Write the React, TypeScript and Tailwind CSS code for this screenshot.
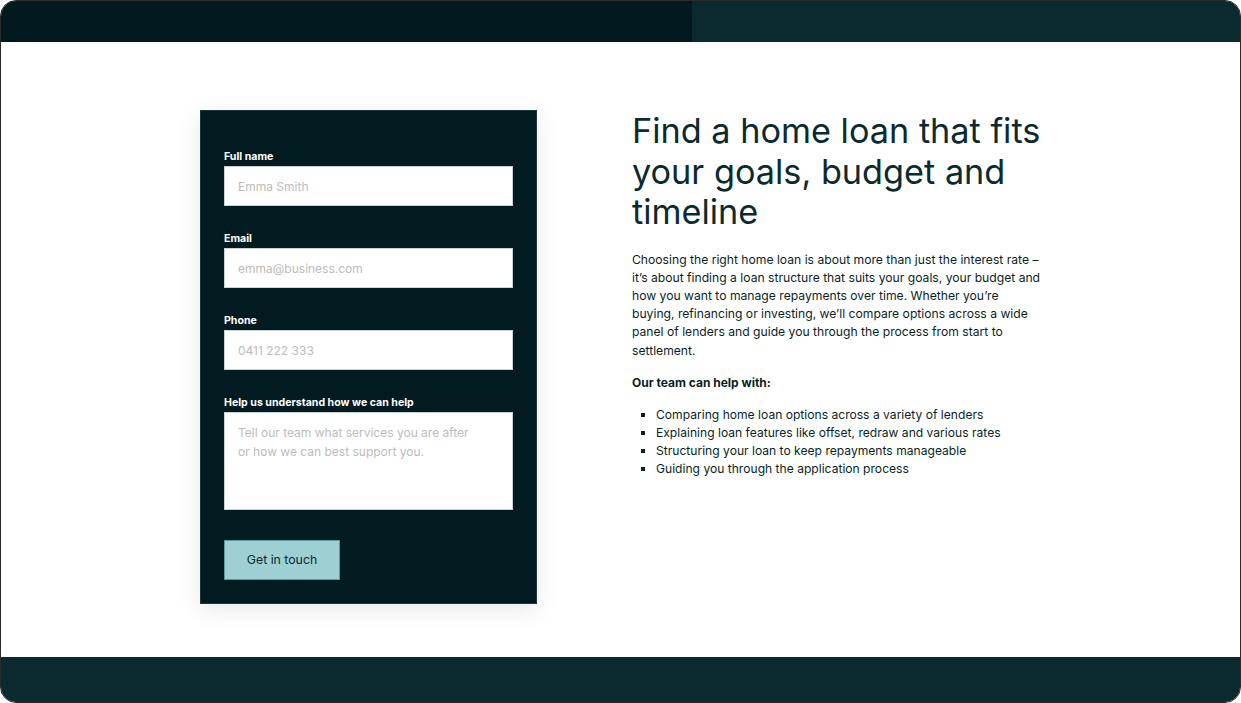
import React from "react";

const font = { fontFamily: "Inter, 'Noto Sans', sans-serif" };

function Field({ label, placeholder }: { label: string; placeholder: string }) {
  return (
    <div className="flex flex-col">
      <label className="text-[10.6px] leading-[13px] font-bold text-white mb-[3px]">{label}</label>
      <input
        className="h-[40px] w-full bg-white border border-[#c9d3d5] px-[13px] text-[12px] text-[#0b2a30] placeholder:text-[#bcbcbc] outline-none"
        placeholder={placeholder}
      />
    </div>
  );
}

export default function App() {
  return (
    <div style={font} className="bg-white">
      <div className="h-[703px] w-full flex flex-col rounded-[16px] border border-[#2b2b2b] overflow-hidden">
        <div className="h-[41px] flex shrink-0">
          <div className="w-[691px] bg-[#021a1f]" />
          <div className="flex-1 bg-[#0b2a30]" />
        </div>
        <div className="flex-1 flex items-start pl-[199px] pt-[68px]">
          <div className="w-[337px] shrink-0 bg-[#021b20] border border-[#1c3539] shadow-[0_6px_24px_rgba(0,0,0,0.09)] px-[23px] pt-[39px] pb-[23px]">
            <div className="flex flex-col gap-[26px]">
              <Field label="Full name" placeholder="Emma Smith" />
              <Field label="Email" placeholder="emma@business.com" />
              <Field label="Phone" placeholder="0411 222 333" />
              <div className="flex flex-col">
                <label className="text-[10.6px] leading-[13px] font-bold text-white mb-[3px]">
                  Help us understand how we can help
                </label>
                <textarea
                  className="h-[98px] w-full resize-none bg-white border border-[#c9d3d5] px-[13px] pt-[10px] text-[12px] leading-[19px] text-[#0b2a30] placeholder:text-[#bcbcbc] outline-none"
                  placeholder={"Tell our team what services you are after\nor how we can best support you."}
                />
              </div>
            </div>
            <button className="mt-[30px] h-[40px] w-[116px] bg-[#9ecfd3] border border-[#5c9aa0] text-[12.3px] text-[#0b2a30]">
              Get in touch
            </button>
          </div>
          <div className="ml-[95px] w-[410px] shrink-0 text-[#0a1f24]">
            <h1 className="w-[440px] pt-[1px] text-[34.25px] leading-[40.5px] font-normal text-[#0b2a30]">
              Find a home loan that fits your goals, budget and timeline
            </h1>
            <p className="mt-[18px] text-[12.15px] leading-[18.2px]">
              Choosing the right home loan is about more than just the interest rate – it’s about finding a loan
              structure that suits your goals, your budget and how you want to manage repayments over time. Whether
              you’re buying, refinancing or investing, we’ll compare options across a wide panel of lenders and guide
              you through the process from start to settlement.
            </p>
            <p className="mt-[14px] text-[12px] leading-[18px] font-bold">Our team can help with:</p>
            <ul className="mt-[14px] list-[square] pl-[24px] text-[12.1px] leading-[18.2px]">
              <li>Comparing home loan options across a variety of lenders</li>
              <li>Explaining loan features like offset, redraw and various rates</li>
              <li>Structuring your loan to keep repayments manageable</li>
              <li>Guiding you through the application process</li>
            </ul>
          </div>
        </div>
        <div className="h-[45px] shrink-0 bg-[#0b2a30]" />
      </div>
    </div>
  );
}
